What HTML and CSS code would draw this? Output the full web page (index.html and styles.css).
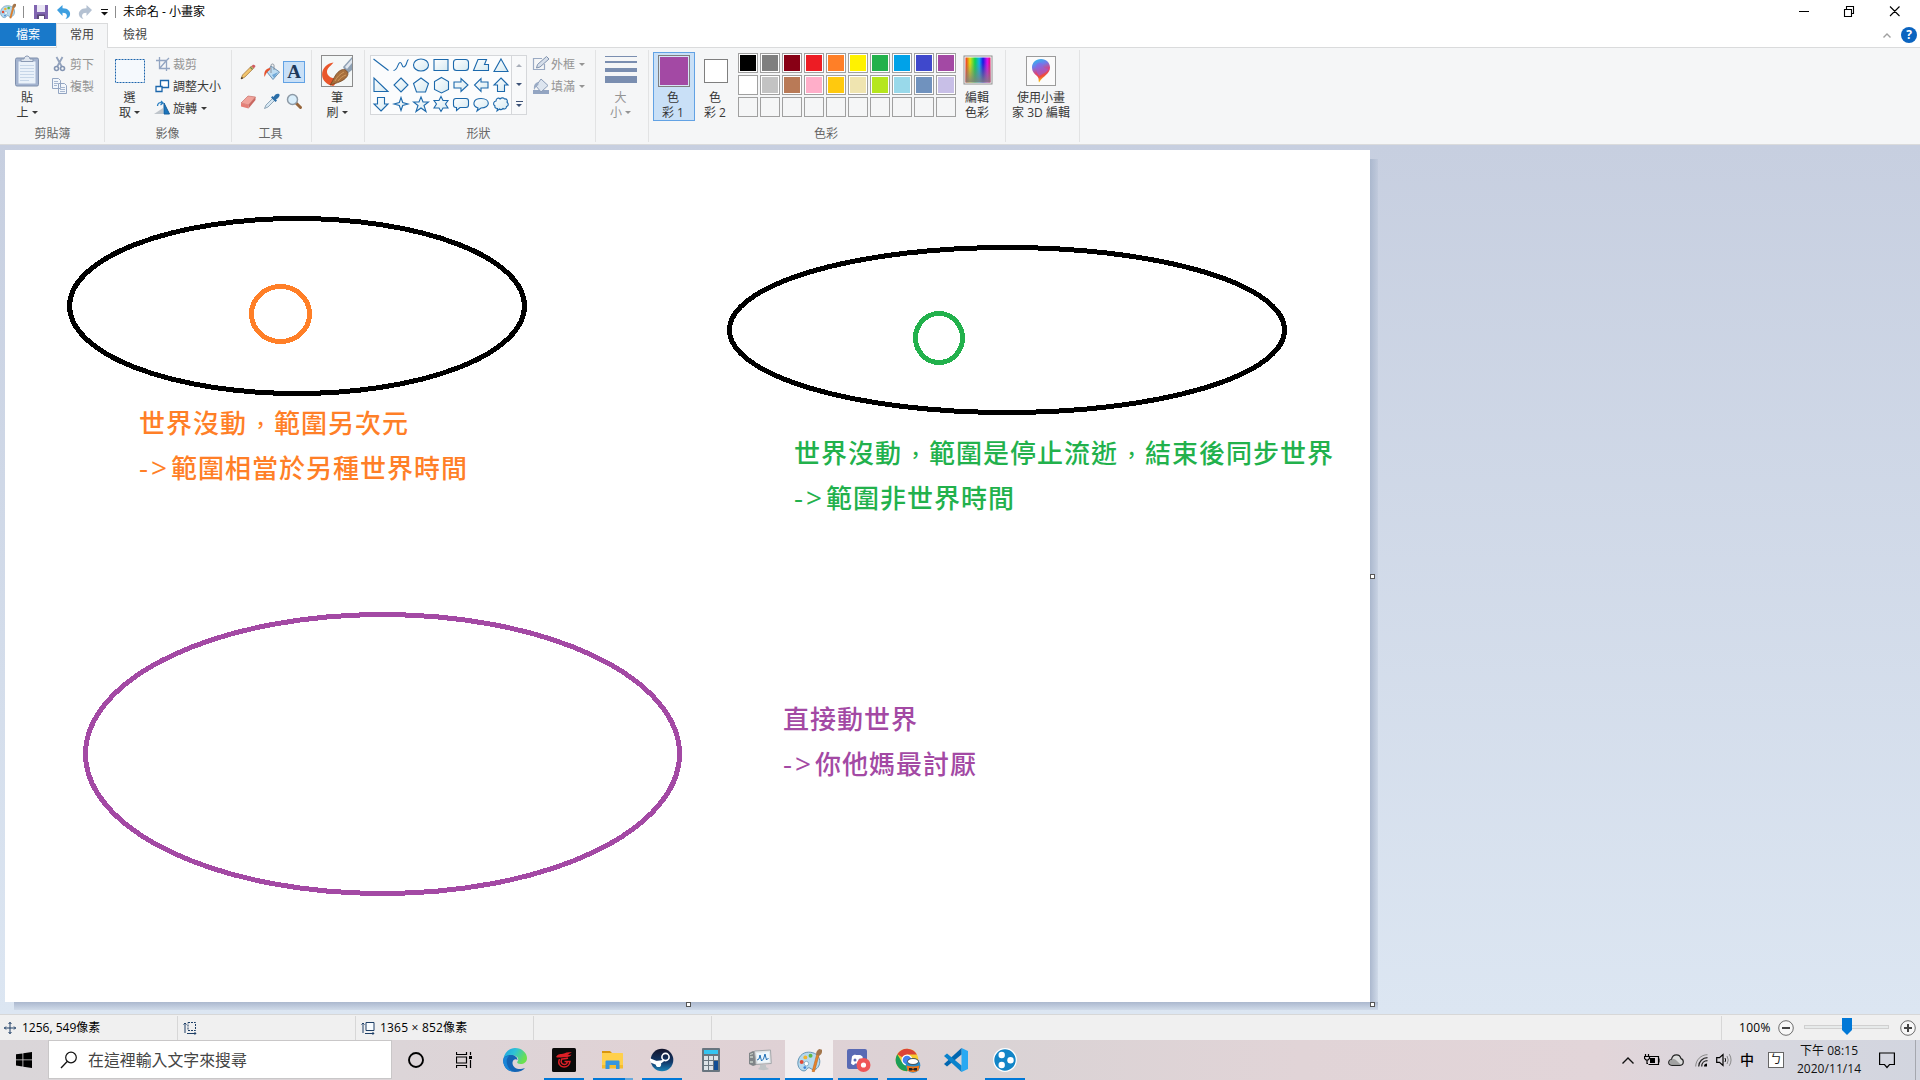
FILE: index.html
```html
<!DOCTYPE html>
<html lang="zh-Hant">
<head>
<meta charset="utf-8">
<title>未命名 - 小畫家</title>
<link rel="stylesheet" href="styles.css">
</head>
<body>
<svg width="0" height="0" class="defs" aria-hidden="true">
  <defs>
    <linearGradient id="shapeFill" x1="0" y1="0" x2="1" y2="1"><stop offset="0" stop-color="#fff"/><stop offset="1" stop-color="#d5e9f1"/></linearGradient>
    <linearGradient id="rainbow"><stop offset="0" stop-color="#f03020"/><stop offset=".18" stop-color="#e0e010"/><stop offset=".38" stop-color="#10d050"/><stop offset=".55" stop-color="#10b0f0"/><stop offset=".7" stop-color="#1818e0"/><stop offset=".87" stop-color="#e010e8"/><stop offset="1" stop-color="#e01060"/></linearGradient>
    <linearGradient id="fadeGray" x1="0" y1="0" x2="0" y2="1"><stop offset=".2" stop-color="#808080" stop-opacity="0"/><stop offset="1" stop-color="#808080" stop-opacity=".9"/></linearGradient>
    <linearGradient id="pin" x1="0" y1="0" x2=".3" y2="1"><stop offset="0" stop-color="#22c7ee"/><stop offset=".35" stop-color="#6f7bea"/><stop offset=".62" stop-color="#d8447f"/><stop offset=".82" stop-color="#ee4d3f"/><stop offset="1" stop-color="#ffc400"/></linearGradient>
    <linearGradient id="edgeG" x1="0" y1="0" x2="1" y2=".4"><stop offset="0" stop-color="#1b9de2"/><stop offset=".5" stop-color="#2fc2d6"/><stop offset="1" stop-color="#6be04f"/></linearGradient>
    <linearGradient id="steamG" x1="0" y1="0" x2="0" y2="1"><stop offset="0" stop-color="#13142b"/><stop offset=".6" stop-color="#123a6b"/><stop offset="1" stop-color="#1a84b8"/></linearGradient>
    <symbol id="palette" viewBox="0 0 24 24">
      <path d="M11 4C5 4 .8 9 .8 14.500c0 4 2.500 7.500 6 7.500 2.600 0 2.200-2.500 4-3 2.200-.6 3 2.500 6 1.800 3.500-.9 5.500-5 5-9C21.200 7 17 4 11 4z" fill="#b5d9ee" stroke="#5b8fb0" stroke-width=".9"/>
      <circle cx="8" cy="9" r="1.900" fill="#f5b32c"/><circle cx="13" cy="7.500" r="1.900" fill="#5fb946"/><circle cx="4.500" cy="13.500" r="1.900" fill="#e04a36"/><circle cx="9" cy="15" r="2.200" fill="#fff" stroke="#5b8fb0" stroke-width=".6"/><circle cx="7.500" cy="18.800" r="1.300" fill="#3c82d8"/>
      <path d="M14.500 22.500 19 6l2.200.7-4.500 16z" fill="#e8842a" stroke="#b65c14" stroke-width=".5"/><path d="M18.500 6.500c-.6-2 .8-4.500 3-5.500l2.500.6c.4 2.500-.5 5-2.800 5.800z" fill="#a3754b"/>
    </symbol>
  </defs>
</svg>

<div class="window">
  <header class="titlebar">
    <svg class="app-icon" width="16" height="16"><use href="#palette"/></svg>
    <i class="tick tick-a"></i>
    <svg class="save" width="14" height="14" viewBox="0 0 14 14"><path d="M0 0h14v14H0z" fill="#8064b0"/><path d="M3 0h8v7H3z" fill="#e9e6f4"/><path d="M3 9.500h8V14H3z" fill="#5b4a78"/><path d="M5 11h5v3H5z" fill="#fff"/></svg>
    <svg class="undo" width="14" height="14" viewBox="0 0 14 14"><path d="M0 5 5.500 0v3.200C11 3 13.800 6.500 13 10c-.5 2-2 3.500-4.500 4 2.400-2.500 2-6.200-3-6.200V11z" fill="#3e9fe0"/></svg>
    <svg class="redo" width="14" height="14" viewBox="0 0 14 14"><path d="M14 5 8.500 0v3.200C3 3 .2 6.500 1 10c.5 2 2 3.500 4.500 4-2.400-2.500-2-6.200 3-6.200V11z" fill="#b4c1d2"/></svg>
    <svg class="customize" width="7" height="7" viewBox="0 0 7 7"><path d="M0 .5h7" stroke="#111"/><path d="M0 3h7l-3.500 3.500z" fill="#111"/></svg>
    <i class="tick tick-b"></i>
    <span class="title">未命名 - 小畫家</span>
    <svg class="win-buttons" width="104" height="12" viewBox="0 0 104 12"><path d="M0 6.500h10M45.500 4.500h7v7h-7zM47.500 4V1.500h7v7H53M91 1.500l9.500 9.500M100.500 1.500 91 11" fill="none" stroke="#000" stroke-width="1.100"/></svg>
  </header>

  <nav class="tabs">
    <span class="tab tab-file">檔案</span>
    <span class="tab tab-active">常用</span>
    <span class="tab tab-view">檢視</span>
    <svg class="collapse" width="8" height="5" viewBox="0 0 8 5"><path d="M.5 4.500 4 1l3.500 3.500" fill="none" stroke="#a0a0a0" stroke-width="1.400"/></svg>
    <span class="help">?</span>
  </nav>

  <section class="ribbon">
    <div class="group g-clipboard">
      <div class="body">
        <div class="big-btn">
          <svg width="26" height="34" viewBox="0 0 26 34"><rect x="1.500" y="4" width="23" height="28" rx="1.500" fill="#a3b3cf" stroke="#7f90ad"/><path d="M4.500 7.500h17v22h-17z" fill="#eaf2fa"/><path d="M6 11.500h14M6 14.500h14M6 17.500h14M6 20.500h14M6 23.500h14M6 26.500h9" stroke="#c6d6e8"/><path d="M7 7.500V5h3c.5-4 5.500-4 6 0h3v2.500z" fill="#dfe6ef" stroke="#8a9ab4"/></svg>
          <span>貼<br>上<i class="dd"></i></span>
        </div>
        <div class="small-col">
          <div class="small-btn disabled"><svg width="18" height="16" viewBox="0 0 18 16"><path d="M5.500 1 11 11M11.500 1 6 11" stroke="#93a3bd" stroke-width="1.800"/><circle cx="5.500" cy="12.500" r="2" fill="none" stroke="#8495b3" stroke-width="1.600"/><circle cx="11.500" cy="12.500" r="2" fill="none" stroke="#8495b3" stroke-width="1.600"/></svg>剪下</div>
          <div class="small-btn disabled"><svg width="18" height="16" viewBox="0 0 18 16"><path d="M1.500.5h6l2 2v8h-8zM7.500 5.500h6l2 2v8h-8z" fill="#f2f6fb" stroke="#93a5c2"/><path d="M3 3.500h4M3 5.500h4M3 7.500h3M9 9.500h5M9 11.500h5M9 13.500h5" stroke="#a7b7d0"/></svg>複製</div>
        </div>
      </div>
      <div class="caption">剪貼簿</div>
    </div>

    <div class="group g-image">
      <div class="body">
        <div class="big-btn">
          <svg width="32" height="34" viewBox="0 0 32 34"><rect x="1.500" y="5.500" width="29" height="23" fill="#f5f9fd" stroke="#1c65ad" stroke-dasharray="2 1"/></svg>
          <span>選<br>取<i class="dd"></i></span>
        </div>
        <div class="small-col">
          <div class="small-btn disabled"><svg width="18" height="16" viewBox="0 0 18 16"><path d="M5.500 1v11.500H16M2 4.500h10.500V15M5.500 12.500 12 5M12 5l3-3" fill="none" stroke="#93a5c2" stroke-width="1.300"/></svg>裁剪</div>
          <div class="small-btn"><svg width="18" height="16" viewBox="0 0 18 16"><path d="M6.500 2.500h8v7h-8z" fill="#fff" stroke="#1b66ab" stroke-width="1.300"/><path d="M2 8.500h6v5H2z" fill="#fff" stroke="#1b66ab" stroke-width="1.300"/></svg>調整大小</div>
          <div class="small-btn"><svg width="18" height="16" viewBox="0 0 18 16"><path d="M0 14 9 8v6z" fill="#bfc5cb"/><path d="M10 3v11h5.500z" fill="#1b75bc" stroke="#155f9d"/><path d="M3.500 6C3.500 3 6 2 8 3M7 1l2 2-2.500 2" fill="none" stroke="#2a7fc2" stroke-width="1.300"/></svg>旋轉<i class="dd"></i></div>
        </div>
      </div>
      <div class="caption">影像</div>
    </div>

    <div class="group g-tools">
      <div class="body">
        <div class="tool"><svg width="18" height="18" viewBox="0 0 18 18"><path d="M2 16l1.500-4L12.500 3l2.200 2.200-9 9z" fill="#f2c56e" stroke="#9a6a2f" stroke-width=".7"/><path d="M12.500 3l1.500-1.200c1.300-.6 2.800.9 2.200 2.200l-1.500 1.200z" fill="#cf5c62"/><path d="M11.300 4.200l2.200 2.200" stroke="#6c8a57" stroke-width="1.300"/><path d="M2 16l.8-2.200 1.400 1.400z" fill="#222"/></svg></div>
        <div class="tool"><svg width="18" height="18" viewBox="0 0 18 18"><path d="M8 3 16.500 9 10 16.500 4 9z" fill="#bddcf2" stroke="#6c93b5"/><path d="M9 12l6-3-4 6z" fill="#6da7d8"/><path d="M8 10V2.500C8 .5 11 .5 11 2.500V7" fill="none" stroke="#88929e"/><path d="M7.500 5C3 5.500.5 8 1.500 14c1.200-2 1.500-4.500 5.200-7z" fill="#e6522d"/></svg></div>
        <div class="tool tool-on"><span class="letter-a">A</span></div>
        <div class="tool"><svg width="18" height="18" viewBox="0 0 18 18"><path d="M2 11 9 4l7.500 1-7 8z" fill="#f0a39b" stroke="#c8736c" stroke-width=".7"/><path d="M2 11l7.500 2v3.500L2 14.500z" fill="#e57e76"/><path d="M9.500 13l7-8v3l-7 8.500z" fill="#c96760"/></svg></div>
        <div class="tool"><svg width="18" height="18" viewBox="0 0 18 18"><path d="M1.500 16.500 3 13l7-7 2 2-7 7z" fill="#d6e7f3" stroke="#7893a8" stroke-width=".8"/><path d="M8 5.500 12.500 10l1.500-1.500-1-1C16 6 17.500 3 16 2s-4 0-5.500 3l-1-1z" fill="#2c6fa8"/></svg></div>
        <div class="tool"><svg width="18" height="18" viewBox="0 0 18 18"><path d="M10.500 10.500l5 5" stroke="#96653a" stroke-width="3" stroke-linecap="round"/><circle cx="7.500" cy="7.500" r="5" fill="#d9eefb" stroke="#8d9aa6" stroke-width="1.500"/></svg></div>
      </div>
      <div class="caption">工具</div>
    </div>

    <div class="group g-brush">
      <div class="body">
        <div class="big-btn">
          <svg width="32" height="34" viewBox="0 0 32 34"><rect x=".5" y="1.500" width="31" height="31" fill="#f4f7f7" stroke="#8c8c8c"/><path d="M12.500 8.500C5 9.500-.5 16 1.500 23.500c1.500 5 6 7.500 10.500 8.500 2-1 4-4 2-7.500C8 24 4 19 7 14.500c1.500-2 3.500-3.500 5.500-6z" fill="#e9562b"/><path d="M22 13 31 3v13l-5 4z" fill="#8ea0b3"/><path d="M24 13l7-8v4l-5 6z" fill="#dfe6ee"/><path d="M9 31c2-2 3-6 6-10.500 2.500-3.500 6-5.500 8.500-5 3 1.500 4.500 4 2.500 7-3 4.500-10 6.500-17 8.500z" fill="#a8703d" stroke="#71441f" stroke-width=".8"/><path d="M14 27c2-4 5-7 9-9M17 27c2-3 5-5 8-6" fill="none" stroke="#cf9a60"/></svg>
          <span>筆<br>刷<i class="dd"></i></span>
        </div>
      </div>
    </div>

    <div class="group g-shapes">
      <div class="body">
        <div class="gallery">
          <div class="shape-grid">
            <svg viewBox="0 0 18 18"><path d="M1.500 3 16.500 14.500"/></svg>
            <svg viewBox="0 0 18 18"><path fill="none" d="M1.500 14.500C6 14 5.500 7 8 6.500c2.500-.3 1.500 5 4 4.500 3-.5 2.500-7 4.500-7.500"/></svg>
            <svg viewBox="0 0 18 18"><ellipse cx="9" cy="9" rx="7.500" ry="6"/></svg>
            <svg viewBox="0 0 18 18"><path d="M2 3.500h14v11H2z"/></svg>
            <svg viewBox="0 0 18 18"><rect x="1.500" y="3.500" width="15" height="11" rx="3"/></svg>
            <svg viewBox="0 0 18 18"><path d="M6 3.500h8.500l-2 5h4v6h-15z"/></svg>
            <svg viewBox="0 0 18 18"><path d="M9 3l7 12.500H2z"/></svg>
            <svg viewBox="0 0 18 18"><path d="M2 2v13.500h14z"/></svg>
            <svg viewBox="0 0 18 18"><path d="M9 2l7 7-7 7-7-7z"/></svg>
            <svg viewBox="0 0 18 18"><path d="M9 2l7.500 5.500-3 8.500h-9l-3-8.500z"/></svg>
            <svg viewBox="0 0 18 18"><path d="M9.500 1.500l7 4v8l-7 3.500-7-3.500v-8z"/></svg>
            <svg viewBox="0 0 18 18"><path d="M2 6h7V2.500L16 9l-7 6.500V12H2z"/></svg>
            <svg viewBox="0 0 18 18"><path d="M16 6H9V2.500L2.500 9 9 15.500V12h7z"/></svg>
            <svg viewBox="0 0 18 18"><path d="M9 2l7 7h-3.500v6.500h-7V9H2z"/></svg>
            <svg viewBox="0 0 18 18"><path d="M9 16l7-7h-3.500V2.500h-7V9H2z"/></svg>
            <svg viewBox="0 0 18 18"><path d="M9 2.500l1.700 5L16 9l-5.300 1.500-1.700 5-1.700-5L2 9l5.300-1.500z"/></svg>
            <svg viewBox="0 0 18 18"><path d="M9 2l2 5h5.500l-4.500 3.500 2 6-5-3.500-5 3.500 2-6L1.500 7H7z"/></svg>
            <svg viewBox="0 0 18 18"><path d="M9 1.500l2 4h5L13.500 9l2.500 4h-5l-2 3.500L7 13H2l2.500-4L2 5.500h5z"/></svg>
            <svg viewBox="0 0 18 18"><path d="M4 3.500h10q2.500 0 2.500 2.500v4q0 2.500-2.500 2.500H8l-3.500 3v-3H4q-2.500 0-2.500-2.500V6q0-2.500 2.500-2.500z"/></svg>
            <svg viewBox="0 0 18 18"><path d="M6 13C-.5 10.500 1 3.500 9 3.500c9.500 0 10 9.500 0 9.500L5 16z"/></svg>
            <svg viewBox="0 0 18 18"><path d="M4 6c0-3 3-3.500 4-2 2-2 4-1 4.500 0C15 3.500 16 6 15 7c2 2 1.500 4-.5 4.500 0 2.500-2.500 3-3.500 2-1.500 1.500-3 1-3.500.5L5 16l.5-2.500C3 13.500 2.500 12 3 11c-2.500-1.500-1.500-4.500 1-5z"/></svg>
          </div>
          <div class="scroll">
            <span><i class="up"></i></span><span><i class="down"></i></span><span class="more"><i class="down"></i></span>
          </div>
        </div>
        <div class="small-col">
          <div class="small-btn disabled"><svg width="18" height="16" viewBox="0 0 18 16"><path d="M10 2.500H1.500v11h11V8" fill="none" stroke="#9aaac3" stroke-width="1.200"/><path d="M4.500 12l1-3.500 9-8L17 3l-9 8z" fill="#d7dfea" stroke="#8092ae"/></svg>外框<i class="dd"></i></div>
          <div class="small-btn disabled"><svg width="18" height="16" viewBox="0 0 18 16"><path d="M1 12h16v4H1z" fill="#93a5c2"/><path d="M9 1l7 6.500L9 14 4 8z" fill="#dde5ef" stroke="#8c9db8"/><path d="M6 4c-3 1-4.500 3-4 8 1.500-2 2-4 4.500-5z" fill="#9aabc5"/></svg>填滿<i class="dd"></i></div>
        </div>
      </div>
      <div class="caption">形狀</div>
    </div>

    <div class="group g-size">
      <div class="body">
        <div class="big-btn disabled">
          <svg width="32" height="34" viewBox="0 0 32 34" fill="#7a8eb0"><path d="M0 2h32v1H0zM0 7h32v2H0zM0 14h32v4H0zM0 22h32v7H0z"/></svg>
          <span>大<br>小<i class="dd"></i></span>
        </div>
      </div>
    </div>

    <div class="group g-colors">
      <div class="body">
        <div class="color-btn active"><i class="swatch-lg"></i><span>色<br>彩 1</span></div>
        <div class="color-btn second"><i class="swatch-md"></i><span>色<br>彩 2</span></div>
        <div class="palette">
          <i class="c-black"></i><i class="c-gray"></i><i class="c-maroon"></i><i class="c-red"></i><i class="c-orange"></i><i class="c-yellow"></i><i class="c-green"></i><i class="c-turquoise"></i><i class="c-indigo"></i><i class="c-purple"></i>
          <i class="c-white"></i><i class="c-silver"></i><i class="c-brown"></i><i class="c-rose"></i><i class="c-gold"></i><i class="c-tan"></i><i class="c-lime"></i><i class="c-sky"></i><i class="c-slate"></i><i class="c-lavender"></i>
          <i></i><i></i><i></i><i></i><i></i><i></i><i></i><i></i><i></i><i></i>
        </div>
        <div class="big-btn edit-colors">
          <svg width="30" height="34" viewBox="0 0 30 34"><rect x="1" y="2" width="28" height="28" fill="#fff" stroke="#8f8f8f"/><rect x="2.500" y="3.500" width="25" height="25" fill="url(#rainbow)"/><rect x="2.500" y="3.500" width="25" height="25" fill="url(#fadeGray)"/></svg>
          <span>編輯<br>色彩</span>
        </div>
      </div>
      <div class="caption">色彩</div>
    </div>

    <div class="group g-3d">
      <div class="body">
        <div class="big-btn">
          <svg width="30" height="34" viewBox="0 0 30 34"><rect x=".5" y="2.500" width="29" height="29" fill="#fbfbfb" stroke="#9b9b9b"/><path d="M15 5c5.500 0 9 3.800 9 8.500 0 6.500-6.500 8-11 15-.8-2.500.5-4-2-6.500C8 19.500 6 17.500 6 13.500 6 8.800 9.500 5 15 5z" fill="url(#pin)"/><path d="M10 13c0-3 2.500-5 5-4 2 1 1.500 4 3.500 5 1.500.8 3 0 4 1-2 4-7 5-9 7-2.500-2-3.500-5-3.500-9z" fill="#8c63e6" opacity=".55"/></svg>
          <span>使用小畫<br>家 3D 編輯</span>
        </div>
      </div>
    </div>
  </section>

  <main class="workspace">
    <div class="canvas">
      <svg class="drawing" width="1365" height="852" viewBox="5 150 1365 852" fill="none" stroke-width="5" shape-rendering="crispEdges">
        <ellipse cx="297" cy="306" rx="227.500" ry="87.500" stroke="#000"/>
        <ellipse cx="280.500" cy="314" rx="29" ry="27.500" stroke="#ff7f27"/>
        <ellipse cx="1007" cy="330" rx="277.500" ry="82.500" stroke="#000"/>
        <ellipse cx="939" cy="338" rx="23.500" ry="24.500" stroke="#22b14c"/>
        <ellipse cx="382.500" cy="754" rx="297" ry="139.500" stroke="#a349a4"/>
      </svg>
      <p class="note note-orange">世界沒動<span class="comma">，</span>範圍另次元<br><span class="arrow"><b>-</b>&gt;</span>範圍相當於另種世界時間</p>
      <p class="note note-green">世界沒動<span class="comma">，</span>範圍是停止流逝<span class="comma">，</span>結束後同步世界<br><span class="arrow"><b>-</b>&gt;</span>範圍非世界時間</p>
      <p class="note note-purple">直接動世界<br><span class="arrow"><b>-</b>&gt;</span>你他媽最討厭</p>
      <i class="shadow-right"></i><i class="shadow-bottom"></i>
      <i class="handle handle-e"></i><i class="handle handle-s"></i><i class="handle handle-se"></i>
    </div>
  </main>

  <footer class="status">
    <div class="cell cell-pos"><svg width="12" height="12" viewBox="0 0 12 12"><path d="M6 0v12M0 6h12M4.500 2 6 .5 7.500 2M4.500 10 6 11.500 7.500 10M2 4.500.5 6 2 7.500M10 4.500 11.500 6 10 7.500" fill="none" stroke="#1e3f66"/></svg><span>1256, 549像素</span></div>
    <div class="cell"><svg width="14" height="14" viewBox="0 0 14 14"><path d="M2 12V2M.5 3.500 2 2l1.500 1.500M4 12.500h9M11.500 11l1.500 1.500-1.500 1" fill="none" stroke="#1e3f66"/><path d="M5 1.500h7.500v8H5z" fill="none" stroke="#1e3f66" stroke-dasharray="2 1"/></svg></div>
    <div class="cell"><svg width="14" height="14" viewBox="0 0 14 14"><path d="M2 12V2M.5 3.500 2 2l1.500 1.500M4 12.500h9M11.500 11l1.500 1.500-1.500 1" fill="none" stroke="#1e3f66"/><path d="M5 1.500h8v8H5z" fill="#f8fcff" stroke="#1e3f66"/></svg><span class="dims">1365 × 852像素</span></div>
    <div class="cell"></div>
    <div class="cell cell-rest"></div>
    <div class="zoom">
      <span class="pct">100%</span>
      <svg width="16" height="16" viewBox="0 0 16 16"><circle cx="8" cy="8" r="7.300" fill="#f7f7f7" stroke="#6d6d6d"/><path d="M4 8h8" stroke="#444" stroke-width="2"/></svg>
      <div class="track"><svg class="thumb" width="10" height="17" viewBox="0 0 10 17"><path d="M0 0h10v12l-5 5-5-5z" fill="#0078d7"/></svg></div>
      <svg width="16" height="16" viewBox="0 0 16 16"><circle cx="8" cy="8" r="7.300" fill="#f7f7f7" stroke="#6d6d6d"/><path d="M4 8h8M8 4v8" stroke="#444" stroke-width="2"/></svg>
    </div>
  </footer>
</div>

<div class="taskbar">
  <div class="start"><svg width="16" height="16" viewBox="0 0 16 16"><path d="M0 2.300 6.500 1.400v6.100H0zM7.300 1.300 16 0v7.500H7.300zM0 8.300h6.500v6.200L0 13.600zM7.300 8.300H16V16l-8.700-1.300z"/></svg></div>
  <div class="search"><svg width="18" height="18" viewBox="0 0 18 18"><circle cx="11" cy="6.500" r="5.300" fill="none" stroke="#111" stroke-width="1.200"/><path d="M7.200 10.500 1 17" stroke="#111" stroke-width="1.300"/></svg><span>在這裡輸入文字來搜尋</span></div>
  <div class="item cortana"><svg width="18" height="18" viewBox="0 0 18 18"><circle cx="9" cy="9" r="7" fill="none" stroke="#000" stroke-width="1.900"/></svg></div>
  <div class="item view"><svg width="17" height="16" viewBox="0 0 17 16"><path d="M.5 0v2.500h10V0M.5 5h10v6H.5zM.5 16v-2.500h10V16M14.500 0v3M14.500 8v8" fill="none" stroke="#000" stroke-width="1.200"/><path d="M13 4h3v3h-3z"/></svg></div>
  <div class="item"><svg width="24" height="24" viewBox="0 0 24 24"><path d="M.3 11C1.500 4 6.500 0 12 0c7 0 12 5 12 10 0 4-3 6-6.500 6-3 0-4-1.500-3-2.500 2-2.500 0-6-5-6C5 7.500 1 9 .3 11z" fill="url(#edgeG)"/><path d="M.2 12C.5 9 4 7 8 7c3.500 0 6.500 2 6.500 5-1.500-1.500-4.500-1-5 2.500-.3 4 4 7 8.500 6.500 2-.2 3.500-1.200 4-1C20 22.500 16.500 24 12 24 5 24 0 18.500.2 12z" fill="#1464b4"/><path d="M.2 12C.5 9.500 3 8 6 8c-2.500 2-3 6-1.500 9.500C6 21.500 9 23.500 12 24 5 24 0 18.500.2 12z" fill="#1a86d8"/></svg></div>
  <div class="item run"><svg width="24" height="24" viewBox="0 0 24 24"><rect width="24" height="24" rx="1.500" fill="#0a0a0a"/><path d="M4 9C6 5.500 9 6.500 12 5.500 14.500 4.500 17 3.800 20 4.800c-2 .2-3 1.200-4.500 2 1.500.2 3 .2 4-.3-1.500 2.700-4.500 2.500-8 2.700C8 9.500 5.500 10 4 9z" fill="#dc1f26"/><path d="M7.500 11C5.500 15.500 8 19 12 19c3.500 0 5.500-2 6-5.500h-5.500M9.500 11.500c-1 3 .5 5 3 5 1.500 0 2.500-.8 2.700-2.500M9 11.200c2-.8 5-.3 7-1.200" fill="none" stroke="#dc1f26" stroke-width="1.500"/></svg></div>
  <div class="item run double"><svg width="24" height="24" viewBox="0 0 24 24"><path d="M1 3h8l2 2H1z" fill="#d9960d"/><path d="M1 5h20.500q.5 0 .5.500V20H1z" fill="#ffd04b"/><path d="M1 17h21v3.500H1z" fill="#f5bd2e"/><path d="M4.500 13.500q0-1 1-1h12q1 0 1 1V21h-3.500v-4H8.500v4h-4z" fill="#3596e0"/></svg></div>
  <div class="item run"><svg width="24" height="24" viewBox="0 0 24 24"><circle cx="12" cy="12" r="11.300" fill="url(#steamG)"/><circle cx="15.500" cy="9" r="3.600" fill="none" stroke="#fff" stroke-width="1.600"/><path d="M1 13.500 8 16.500l6-4.500M1 13.500v-1.800l6.500 2.800" fill="#fff" stroke="#fff" stroke-width="2"/><circle cx="8.500" cy="16.500" r="2.600" fill="#fff"/></svg></div>
  <div class="item"><svg width="24" height="24" viewBox="0 0 24 24"><rect x="3" width="18" height="24" rx="1" fill="#69757f"/><path d="M5 2h14v4H5z" fill="#35c4f1"/><path d="M5 8h4v4H5zM10 8h4v4h-4zM15 8h4v4h-4zM5 13h4v4H5zM10 13h4v4h-4zM5 18h4v4H5zM10 18h4v4h-4z" fill="#dde3e8"/><path d="M15 13h4v9h-4z" fill="#104e96"/></svg></div>
  <div class="item run"><svg width="24" height="24" viewBox="0 0 24 24"><path d="M1 5l4-2 3 1v13l-3 1-4-2z" fill="#7f8487"/><path d="M2 6.500l3-1M2 9h3M2 14h3" stroke="#c7d0c9" stroke-width="1.300"/><path d="M6.500 3 22.500 2l.8 13.500L8 16.500z" fill="#e3e6e8" stroke="#a3a7aa"/><path d="M8.500 5 21 4l.5 10L9.800 15z" fill="#eef7fc"/><path d="M9 12l2-1 1-4 1.500 6 2-2L17 6l1.500 6 2-2" fill="none" stroke="#1c6db5"/><path d="M12 17h6v2l3 2c-3 1.500-8 1.500-11 0l2-2z" fill="#bfc3c5"/></svg></div>
  <div class="item run current"><svg width="25" height="25"><use href="#palette"/></svg></div>
  <div class="item run"><svg width="25" height="24" viewBox="0 0 25 24"><rect x="1" y="1" width="20" height="20" rx="2" fill="#596ab4"/><path d="M5 15.500 6 8.500c1-1.500 3-2 4-1.500h2.500c1.500-.3 3 .2 4 1.500l1 7c-1 1-2 1.500-3.500 1.500l-1-1.500h-4l-1 1.500c-1 0-2-.5-3-1.500z" fill="#fff"/><circle cx="9" cy="12" r="1.500" fill="#596ab4"/><circle cx="14" cy="12" r="1.500" fill="#596ab4"/><circle cx="17.500" cy="17" r="7" fill="#ef5658"/><circle cx="17.500" cy="17" r="2.600" fill="#fff"/></svg></div>
  <div class="item run"><svg class="chrome" width="26" height="25" viewBox="0 0 26 25"><circle cx="12" cy="12" r="11.300" fill="#f7cb31"/><path d="M12 12 2.300 6.200A11.300 11.300 0 0 1 21.800 6.500L12 6.500z" fill="#db4437"/><path d="M2.300 6.200A11.300 11.300 0 0 0 12 23.300l4.500-8.800-9.500-.3z" fill="#1b9e58"/><circle cx="12" cy="12" r="5.500" fill="#fff"/><circle cx="12" cy="12" r="4.300" fill="#4382ee"/><circle cx="18" cy="17.500" r="7.300" fill="#258ccc"/><ellipse cx="18" cy="13.500" rx="5.500" ry="3" fill="#fff" stroke="#222" stroke-width=".7"/><path d="M11.500 17.500q6.500 2 13 0l-1 5q-5.500 3.500-11 0z" fill="#ed761b"/><path d="M14 20h2.500l1.500 1 1.500-1H22v2.500h-2.500L18 21.500l-1.500 1H14z" fill="#222"/></svg></div>
  <div class="item"><svg width="24" height="24" viewBox="0 0 24 24"><path d="M17.500 0 24 3v18l-6.500 3z" fill="#29a9f2"/><path d="M17.500 0v6.500L3 18.500l-3-2.500z" fill="#0066b0"/><path d="M17.500 24v-6.500L3 5.500 0 8z" fill="#0a83cc"/></svg></div>
  <div class="item run"><svg width="24" height="24" viewBox="0 0 24 24"><circle cx="12" cy="12" r="11.300" fill="#1285c7" stroke="#fff" stroke-width="1.200"/><circle cx="8.700" cy="7" r="3.200" fill="#fff"/><circle cx="17.500" cy="12.200" r="3.200" fill="#fff"/><circle cx="8.700" cy="17" r="3.200" fill="#fff"/></svg></div>

  <div class="tray">
    <svg width="12" height="7" viewBox="0 0 12 7"><path d="M.5 6.500 6 1l5.500 5.500" fill="none" stroke="#111" stroke-width="1.400"/></svg>
    <svg class="t-batt" width="16" height="12" viewBox="0 0 16 12"><path d="M4.500 2.500h10v8h-10M15 4.500v4M1.500 0v2.500M4.500 0v2.500M.5 2.500h5v2L4 6H2L.5 4.500zM3 6v3.500h1" fill="none" stroke="#000" stroke-width="1.200"/><path d="M6 4h5v5H6z"/></svg>
    <svg class="t-cloud" width="16" height="12" viewBox="0 0 16 12"><path d="M4 11.300C1.500 11.300.7 9.800.7 8.500S2 5.500 3.500 5.500C4 2.500 6 .8 8.500.8s4 1.700 4.500 3.800c1.500.4 2.300 1.700 2.300 3.200 0 2-1.300 3.500-3.300 3.500z" fill="#dbdbdb" stroke="#222" stroke-width="1.200"/><path d="M1.500 8c1-3 4-4 7-1.500L13 10.700H4C2.500 10.700 1.500 9.500 1.500 8z" fill="#8a8a8a" opacity=".7"/></svg>
    <svg class="t-wifi" width="13" height="13" viewBox="0 0 13 13"><path d="M.7 12.500C.7 6 6 .7 12.500.7" fill="none" stroke="#888"/><path d="M3.700 12.500c0-5 4-8.800 8.800-8.800M6.700 12.500c0-3.500 2.500-5.800 5.800-5.800" fill="none" stroke="#222" stroke-width="1.200"/><path d="M9 12.500a3 3 0 0 1 3-3v3z"/></svg>
    <svg class="t-vol" width="16" height="14" viewBox="0 0 16 14"><path d="M.7 4.700h2.800L7 1.500v11L3.500 9.300H.7z" fill="none" stroke="#000" stroke-width="1.200"/><path d="M9 5q1.300 2 0 4" fill="none" stroke="#111"/><path d="M11 3q2.500 4 0 8M13.300 1.200q3.500 5.800 0 11.600" fill="none" stroke="#888"/></svg>
    <span class="ime">中</span>
    <span class="bopo">ㄅ</span>
    <div class="clock">下午 08:15<br>2020/11/14</div>
    <svg class="t-note" width="16" height="17" viewBox="0 0 16 17"><path d="M.6 1h14.800v11.500H10.500L8 15.500l-2.500-3H.6z" fill="none" stroke="#000" stroke-width="1.200"/></svg>
    <i class="peek"></i>
  </div>
</div>
</body>
</html>
```
FILE: styles.css
```css
* { box-sizing: border-box; }
html, body { margin: 0; height: 100%; overflow: hidden; }
body {
  width: 1920px; height: 1080px; display: flex; flex-direction: column;
  font: 12px/15px "Open Sans", "Noto Sans CJK TC", sans-serif; color: #383838;
  background: #fff;
}
i { font-style: normal; display: block; }
svg { display: block; flex: none; }
.defs { position: absolute; }
.window { height: 1040px; display: flex; flex-direction: column; }

/* title bar */
.titlebar { height: 23px; display: flex; align-items: center; }
.app-icon { margin-top: -1px; }
.tick { width: 1px; height: 12px; background: #8c8c8c; }
.tick-a { margin: 0 10px 0 7px; }
.save { margin-right: 9px; }
.undo { margin-right: 7px; }
.redo { margin-right: 9px; }
.customize { margin: 2px 7px 0 0; }
.tick-b { margin-right: 7px; }
.title { color: #000; margin-top: -1px; white-space: nowrap; }
.win-buttons { margin: -2px 17px 0 auto; }

/* tabs */
.tabs { height: 25px; display: flex; align-items: flex-start; border-bottom: 1px solid #dadbdc; }
.tab { height: 23px; line-height: 23px; text-align: center; color: #444; }
.tab-file { width: 56px; background: #1979ca; color: #fff; }
.tab-active { width: 52px; height: 25px; background: #f5f6f7; border: 1px solid #dadbdc; border-bottom: 0; line-height: 22px; }
.tab-view { width: 54px; }
.collapse { margin: 10px 10px 0 auto; }
.help { width: 16px; height: 16px; margin: 4px 3px 0 0; border-radius: 50%; background: #0b64c0; color: #fff; text-align: center; font: bold 12px/16px "Open Sans", sans-serif; }

/* ribbon */
.ribbon { height: 97px; display: flex; background: #f5f6f7; border-bottom: 1px solid #dadbdc; padding: 2px 0; }
.group { height: 92px; border-right: 1px solid #e2e3e4; display: flex; flex-direction: column; }
.body { height: 76px; display: flex; padding-top: 4px; }
.caption { text-align: center; line-height: 15px; color: #666; }
.big-btn { display: flex; flex-direction: column; align-items: center; text-align: center; white-space: nowrap; height: 72px; }
.big-btn span { margin-top: 2px; }
.dd { display: inline-block; margin-left: 3px; vertical-align: 3px; border: 3px solid transparent; border-top-color: currentColor; border-bottom: 0; }
.small-col { display: flex; flex-direction: column; margin-top: -1px; }
.small-btn { display: flex; align-items: center; height: 22px; white-space: nowrap; }
.small-btn svg { margin-right: 1px; }
.small-btn .dd { margin-left: 4px; }
.disabled { color: #949494; }

.g-clipboard { width: 105px; }
.g-clipboard .body { padding-left: 12px; }
.g-clipboard .big-btn { width: 30px; }
.g-clipboard .small-col { padding-left: 9px; }
.g-clipboard .caption { margin-left: 1px; }
.g-image { width: 127px; }
.g-image .body { padding-left: 8px; }
.g-image .big-btn { width: 33px; }
.g-image .small-col { padding-left: 8px; }
.g-image .caption { margin-right: 1px; }
.g-tools { width: 80px; }
.g-tools .body { padding: 11px 0 0 4px; display: grid; grid-template-columns: 24px 23px 22px; grid-template-rows: 22px 22px; row-gap: 7px; align-content: start; }
.g-tools .caption { margin-right: 2px; }
.tool { display: flex; align-items: center; justify-content: center; height: 22px; }
.tool-on { background: #c9e0f7; border: 1px solid #62a2e4; }
.letter-a { font: bold 19px/20px "Liberation Serif", serif; color: #1e395b; }
.g-brush { width: 53px; }
.g-brush .body { padding-left: 9px; }
.g-shapes { width: 231px; }
.g-shapes .body { padding-left: 5px; }
.gallery { width: 157px; height: 60px; margin-top: 1px; border: 1px solid #d5d7da; background: #fbfcfd; display: flex; }
.shape-grid { width: 141px; display: grid; grid-template-columns: repeat(7, 20px); grid-template-rows: repeat(3, 19.5px); }
.shape-grid svg { width: 18px; height: 18px; margin: 0 1px; fill: url(#shapeFill); stroke: #1c69ac; stroke-width: 1.1; }
.scroll { width: 15px; border-left: 1px solid #d5d7da; display: grid; grid-template-rows: repeat(3, 1fr); }
.scroll span { display: flex; flex-direction: column; align-items: center; justify-content: center; background: #f8f9fa; }
.up { border: 3px solid transparent; border-bottom-color: #a9afb9; border-top: 0; }
.down { border: 3px solid transparent; border-top-color: #3d5277; border-bottom: 0; }
.scroll .more::before { content: ""; width: 7px; height: 1px; background: #3d5277; margin-bottom: 2px; }
.g-shapes .small-col { padding-left: 5px; }
.g-shapes .caption { margin-right: 3px; }
.g-size { width: 53px; }
.g-size .body { padding-left: 9px; }
.g-size .big-btn span { margin-left: -1px; }
.g-colors { width: 357px; }
.g-colors .body { padding: 2px 0 0 4px; }
.g-colors .caption { margin-right: 2px; }
.color-btn { width: 42px; height: 69px; display: flex; flex-direction: column; align-items: center; text-align: center; border: 1px solid transparent; }
.color-btn span { margin: 3px 0 0 -2px; white-space: nowrap; }
.color-btn.active { background: #c9e0f7; border-color: #62a2e4; }
.swatch-lg { width: 32px; height: 32px; margin-top: 2px; border: 1px solid #7f7f7f; background: #a349a4; box-shadow: inset 0 0 0 1px #d6e6f5; }
.swatch-md { width: 24px; height: 24px; margin: 6px 0 4px; border: 1px solid #7f7f7f; background: #fff; }
.palette { margin: 1px 0 0 1px; display: grid; grid-template-columns: repeat(10, 20px); grid-template-rows: repeat(3, 20px); gap: 2px; align-content: start; }
.palette i { border: 1px solid #a0a0a0; background: #f5f6f7; }
.palette [class] { box-shadow: inset 0 0 0 1px #fff; }
.palette .c-black { background: #000; }
.palette .c-gray { background: #7f7f7f; }
.palette .c-maroon { background: #880015; }
.palette .c-red { background: #ed1c24; }
.palette .c-orange { background: #ff7f27; }
.palette .c-yellow { background: #fff200; }
.palette .c-green { background: #22b14c; }
.palette .c-turquoise { background: #00a2e8; }
.palette .c-indigo { background: #3f48cc; }
.palette .c-purple { background: #a349a4; }
.palette .c-white { background: #fff; }
.palette .c-silver { background: #c3c3c3; }
.palette .c-brown { background: #b97a57; }
.palette .c-rose { background: #ffaec9; }
.palette .c-gold { background: #ffc90e; }
.palette .c-tan { background: #efe4b0; }
.palette .c-lime { background: #b5e61d; }
.palette .c-sky { background: #99d9ea; }
.palette .c-slate { background: #7092be; }
.palette .c-lavender { background: #c8bfe7; }
.edit-colors { margin: 2px 0 0 7px; }
.edit-colors span { margin-left: -2px; }
.g-3d { width: 74px; }
.g-3d .body { justify-content: center; padding-right: 3px; }

/* workspace */
.workspace { height: 869px; padding: 5px; background: linear-gradient(#c7cfe0, #dce6f2); }
.canvas { position: relative; width: 1365px; height: 852px; background: #fff; }
.note { position: absolute; margin: 0; font: 500 26px/45px "Noto Sans CJK TC", sans-serif; letter-spacing: 1px; white-space: nowrap; }
.comma { display: inline-block; width: 27px; font-size: 20px; letter-spacing: 0; line-height: 1; text-align: center; }
.arrow { display: inline-block; width: 32px; font: 500 28px/45px "Open Sans", sans-serif; letter-spacing: 0; }
.arrow b { display: inline-block; width: 12px; font-weight: 500; }
.note-orange { left: 134px; top: 249px; color: #ff7f27; }
.note-green { left: 789px; top: 279px; color: #22b14c; }
.note-purple { left: 778px; top: 545px; color: #a349a4; }
.shadow-right, .shadow-bottom { position: absolute; }
.shadow-right { left: 1365px; top: 9px; width: 8px; height: 843px; background: linear-gradient(90deg, #abb8ce, rgba(171, 184, 206, .25)); }
.shadow-bottom { left: 9px; top: 852px; width: 1364px; height: 8px; background: linear-gradient(#abb8ce, rgba(171, 184, 206, .25)); }
.handle { position: absolute; width: 5px; height: 5px; background: #fff; border: 1px solid #555; }
.handle-e { left: 1365px; top: 424px; }
.handle-s { left: 681px; top: 852px; }
.handle-se { left: 1365px; top: 852px; }

/* status bar */
.status { height: 26px; display: flex; background: #f0f0f0; border-top: 1px solid #d7d7d7; color: #000; }
.cell { width: 178px; height: 24px; margin-top: 1px; border-right: 1px solid #d7d7d7; display: flex; align-items: center; padding: 0 0 0 5px; white-space: nowrap; }
.cell svg { margin-right: 5px; }
.cell span { margin-top: -2px; }
.cell-pos { padding-left: 4px; }
.cell-pos svg { margin-right: 6px; }
.dims { letter-spacing: .2px; }
.cell-rest { width: 1010px; }
.zoom { display: flex; align-items: center; padding-left: 17px; }
.pct { width: 39px; letter-spacing: .3px; }
.track { width: 85px; height: 4px; margin: -2px 11px 0 10px; border: 1px solid #d0d0d0; background: #e7eaea; position: relative; }
.thumb { position: absolute; left: 37px; top: -8px; }

/* taskbar */
.taskbar { height: 40px; display: flex; background: linear-gradient(90deg, #dad6d9 0, #dcd5d8 400px, #e0d2d5 650px, #dfd1d5 800px, #dad3d5 1000px, #e1d4d7 1300px, #e2d5d9 1600px, #d7d7df 1760px, #d2d5df); color: #111; }
.start { width: 48px; display: flex; align-items: center; justify-content: center; }
.search { width: 344px; height: 39px; background: #fff; border: 1px solid #c9c7c8; display: flex; align-items: center; padding-left: 11px; }
.search span { margin-left: 10px; font-size: 15.9px; line-height: 22px; color: #444; }
.item { width: 48px; margin-right: 1px; border-bottom: 2px solid transparent; display: flex; align-items: center; justify-content: center; padding-top: 2px; }
.cortana { margin-right: 0; }
.view { margin-right: 3px; }
.run { width: 40px; margin: 0 5px 0 4px; border-bottom-color: #0078d7; }
.double { border-image: linear-gradient(90deg, #0078d7 32px, #66a9dc 32px) 0 0 2 0; }
.current { width: 48px; margin: 0 1px 0 0; background: #f3eff0; }
.chrome { margin-left: 2px; }
.tray { margin-left: auto; display: flex; align-items: center; }
.t-batt { margin-left: 10px; }
.t-cloud { margin-left: 8px; }
.t-wifi { margin-left: 11px; }
.t-vol { margin-left: 8px; }
.ime { margin-left: 8px; font-size: 14px; line-height: 20px; font-weight: 500; color: #000; }
.bopo { width: 16px; height: 16px; margin-left: 14px; background: #fff; border: 1px solid #666; font-size: 12px; line-height: 13px; text-align: center; }
.clock { width: 74px; margin: 0 1px 0 8px; text-align: center; font-size: 12px; line-height: 18px; white-space: nowrap; letter-spacing: .05px; }
.t-note { margin-left: 12px; }
.peek { width: 1px; height: 40px; margin: 0 4px 0 20px; background: #a5a7ae; }
```
